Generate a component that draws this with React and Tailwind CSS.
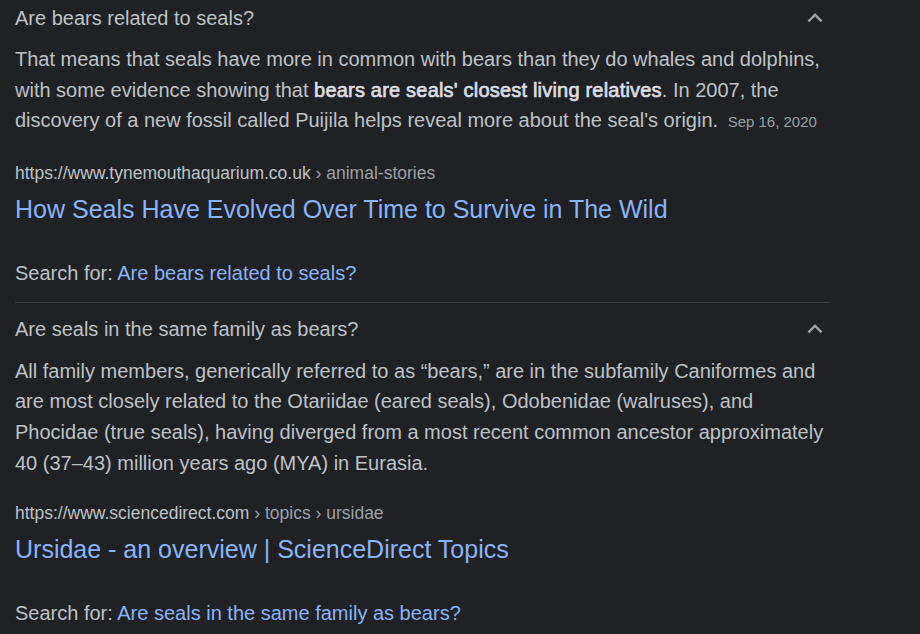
const Chevron = () => (
  <svg viewBox="0 0 24 24" className="w-[30px] h-[30px] fill-[#9aa0a6]">
    <path d="M12 8l-6 6 1.41 1.41L12 10.83l4.59 4.58L18 14z" />
  </svg>
);

const Question = ({ question, children, url, crumbs, title, first }) => {
  return (
    <div className={first ? "" : "border-t border-[#3c4043]"}>
      <div className={`flex items-center justify-between h-[53px] ${first ? "-mt-[9px]" : ""}`}>
        <span className="text-[20px] text-[#bdc1c6]">{question}</span>
        <Chevron />
      </div>

      <div className="text-[20px] leading-[30.6px] text-[#bdc1c6] pr-[6px]">{children}</div>

      <div className="mt-[23px] text-[17.5px] leading-[24px] text-[#bdc1c6]">
        {url}
        <span className="text-[#9aa0a6]">{crumbs}</span>
      </div>

      <div className="mt-[9px] text-[25px] leading-[30px] text-[#8ab4f8]">{title}</div>

      <div className="mt-[34px] pb-[14px] text-[20px] leading-[30px] text-[#bdc1c6]">
        Search for: <span className="text-[#8ab4f8]">{question}</span>
      </div>
    </div>
  );
};

export default function App() {
  return (
    <div className="min-h-screen bg-[#202124] overflow-hidden font-['Liberation_Sans',Arial,sans-serif]">
      <div className="ml-[15px] w-[815px]">
        <Question
          first
          question="Are bears related to seals?"
          url="https://www.tynemouthaquarium.co.uk"
          crumbs=" › animal-stories"
          title="How Seals Have Evolved Over Time to Survive in The Wild"
        >
          That means that seals have more in common with bears than they do whales and dolphins,
          with some evidence showing that{" "}
          <span className="text-[#dadce0] tracking-[0.2px] [-webkit-text-stroke:0.7px_#dadce0]">bears are seals' closest living relatives</span>. In 2007, the
          discovery of a new fossil called Puijila helps reveal more about the seal's origin.{" "}
          <span className="ml-[4px] text-[15px] text-[#9aa0a6]">Sep 16, 2020</span>
        </Question>

        <Question
          question="Are seals in the same family as bears?"
          url="https://www.sciencedirect.com"
          crumbs=" › topics › ursidae"
          title="Ursidae - an overview | ScienceDirect Topics"
        >
          All family members, generically referred to as “bears,” are in the subfamily Caniformes and
          are most closely related to the Otariidae (eared seals), Odobenidae (walruses), and
          Phocidae (true seals), having diverged from a most recent common ancestor approximately
          40 (37–43) million years ago (MYA) in Eurasia.
        </Question>
      </div>
    </div>
  );
}
